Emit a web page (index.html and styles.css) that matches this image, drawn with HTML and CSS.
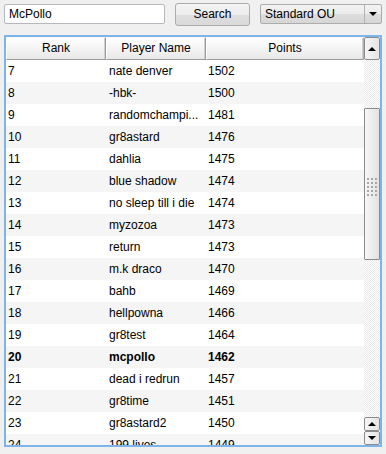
FILE: index.html
```html
<!DOCTYPE html>
<html>
<head>
<meta charset="utf-8">
<link rel="stylesheet" href="styles.css">
</head>
<body>
<div class="toolbar">
  <div class="input">McPollo</div>
  <div class="button">Search</div>
  <div class="combo">
    <span class="combo-text">Standard OU</span>
    <span class="combo-arrow"><span class="tri-down"></span></span>
  </div>
</div>
<div class="frame">
  <div class="table">
    <div class="header">
      <div class="hcell c-rank">Rank</div>
      <div class="hcell c-name">Player Name</div>
      <div class="hcell c-points">Points</div>
    </div>
    <div class="rows">
      <div class="row"><span class="c-rank">7</span><span class="c-name">nate denver</span><span class="c-points">1502</span></div>
      <div class="row alt"><span class="c-rank">8</span><span class="c-name">-hbk-</span><span class="c-points">1500</span></div>
      <div class="row"><span class="c-rank">9</span><span class="c-name">randomchampi...</span><span class="c-points">1481</span></div>
      <div class="row alt"><span class="c-rank">10</span><span class="c-name">gr8astard</span><span class="c-points">1476</span></div>
      <div class="row"><span class="c-rank">11</span><span class="c-name">dahlia</span><span class="c-points">1475</span></div>
      <div class="row alt"><span class="c-rank">12</span><span class="c-name">blue shadow</span><span class="c-points">1474</span></div>
      <div class="row"><span class="c-rank">13</span><span class="c-name">no sleep till i die</span><span class="c-points">1474</span></div>
      <div class="row alt"><span class="c-rank">14</span><span class="c-name">myzozoa</span><span class="c-points">1473</span></div>
      <div class="row"><span class="c-rank">15</span><span class="c-name">return</span><span class="c-points">1473</span></div>
      <div class="row alt"><span class="c-rank">16</span><span class="c-name">m.k draco</span><span class="c-points">1470</span></div>
      <div class="row"><span class="c-rank">17</span><span class="c-name">bahb</span><span class="c-points">1469</span></div>
      <div class="row alt"><span class="c-rank">18</span><span class="c-name">hellpowna</span><span class="c-points">1466</span></div>
      <div class="row"><span class="c-rank">19</span><span class="c-name">gr8test</span><span class="c-points">1464</span></div>
      <div class="row alt bold"><span class="c-rank">20</span><span class="c-name">mcpollo</span><span class="c-points">1462</span></div>
      <div class="row"><span class="c-rank">21</span><span class="c-name">dead i redrun</span><span class="c-points">1457</span></div>
      <div class="row alt"><span class="c-rank">22</span><span class="c-name">gr8time</span><span class="c-points">1451</span></div>
      <div class="row"><span class="c-rank">23</span><span class="c-name">gr8astard2</span><span class="c-points">1450</span></div>
      <div class="row alt"><span class="c-rank">24</span><span class="c-name">199 lives</span><span class="c-points">1449</span></div>
    </div>
  </div>
  <div class="scrollbar">
    <div class="sbtn top"><span class="tri-up"></span></div>
    <div class="track">
      <div class="track-gap-top"></div>
      <div class="thumb"><span class="grip"></span></div>
    </div>
    <div class="sbtn small"><span class="tri-up"></span></div>
    <div class="sbtn small"><span class="tri-down"></span></div>
  </div>
</div>
</body>
</html>
```

FILE: styles.css
```css
* { box-sizing: border-box; }
html, body {
  margin: 0;
  padding: 0;
  background: #f0f0f0;
  font-family: "Liberation Sans", Arial, sans-serif;
  font-size: 12px;
  color: #000;
  width: 386px;
  height: 454px;
  overflow: hidden;
}
.toolbar {
  height: 28px;
  display: flex;
  align-items: center;
  padding-left: 4px;
}
.input {
  width: 161px;
  height: 20px;
  background: #fff;
  border: 1px solid #b5b8bd;
  border-radius: 2px;
  padding-left: 4px;
  line-height: 18px;
}
.button {
  margin-left: 10px;
  width: 75px;
  height: 23px;
  border: 1px solid #acacac;
  border-radius: 3px;
  background: linear-gradient(#f4f4f4, #ececec 50%, #dedede 51%, #d9d9d9);
  text-align: center;
  line-height: 21px;
}
.combo {
  margin-left: 10px;
  width: 122px;
  height: 20px;
  border: 1px solid #acacac;
  border-radius: 2px;
  background: linear-gradient(#f3f3f3, #ebebeb 50%, #dddddd 51%, #d6d6d6);
  display: flex;
}
.combo-text {
  flex: 1;
  padding-left: 4px;
  line-height: 18px;
}
.combo-arrow {
  width: 17px;
  border-left: 1px solid #b3b3b3;
  display: flex;
  align-items: center;
  justify-content: center;
}
.tri-down {
  width: 0; height: 0;
  border-left: 4px solid transparent;
  border-right: 4px solid transparent;
  border-top: 4px solid #000;
}
.tri-up {
  width: 0; height: 0;
  border-left: 4px solid transparent;
  border-right: 4px solid transparent;
  border-bottom: 4px solid #000;
}
.frame {
  margin: 7px 0 0 4px;
  width: 378px;
  height: 412px;
  border: 2px solid #7db4ea;
  background: #fff;
  display: flex;
}
.table {
  width: 358px;
  display: flex;
  flex-direction: column;
  overflow: hidden;
}
.header {
  display: flex;
  height: 23px;
  flex: none;
}
.hcell {
  height: 23px;
  line-height: 21px;
  text-align: center;
  background: linear-gradient(#ffffff, #f4f4f4 50%, #e8e8e8);
  border-top: 1px solid #f8f8f8;
  border-left: 1px solid #fdfdfd;
  border-right: 1px solid #9a9a9a;
  border-bottom: 1px solid #9a9a9a;
  box-shadow: inset -1px 0 0 #d0d0d0;
}
.hcell.c-points { border-right: 1px solid #b0b0b0; }
.c-rank { width: 100px; flex: none; }
.c-name { width: 100px; flex: none; }
.c-points { width: 158px; flex: none; }
.rows { flex: 1; overflow: hidden; }
.row {
  display: flex;
  height: 22px;
  line-height: 22px;
  background: #fff;
}
.row.alt { background: #f5f5f5; }
.row.bold { font-weight: bold; }
.row span { padding-left: 2px; white-space: nowrap; overflow: hidden; }
.row .c-name { padding-left: 3px; }
.row .c-points { padding-left: 2px; }
.scrollbar {
  width: 16px;
  display: flex;
  flex-direction: column;
}
.sbtn {
  flex: none;
  border: 1px solid #8b8b8b;
  border-radius: 2px;
  background: linear-gradient(to right, #f6f6f6, #e4e4e4);
  display: flex;
  align-items: center;
  justify-content: center;
}
.sbtn.top { height: 23px; }
.sbtn.small { height: 14px; }
.track {
  flex: 1;
  background: repeating-conic-gradient(#ffffff 0 25%, #e9e9e9 0 50%) 0 0 / 2px 2px;
  display: flex;
  flex-direction: column;
}
.track-gap-top { height: 48px; flex: none; }
.thumb {
  height: 152px;
  border: 1px solid #8b8b8b;
  border-radius: 1px;
  background: linear-gradient(to right, #f7f7f7, #e2e2e2);
  display: flex;
  align-items: center;
  justify-content: center;
}
.grip {
  width: 10px;
  height: 18px;
  margin-top: 6px;
  background: conic-gradient(at 2px 2px, transparent 75%, #a8a8a8 0) 0 0 / 4px 4px;
}
```
